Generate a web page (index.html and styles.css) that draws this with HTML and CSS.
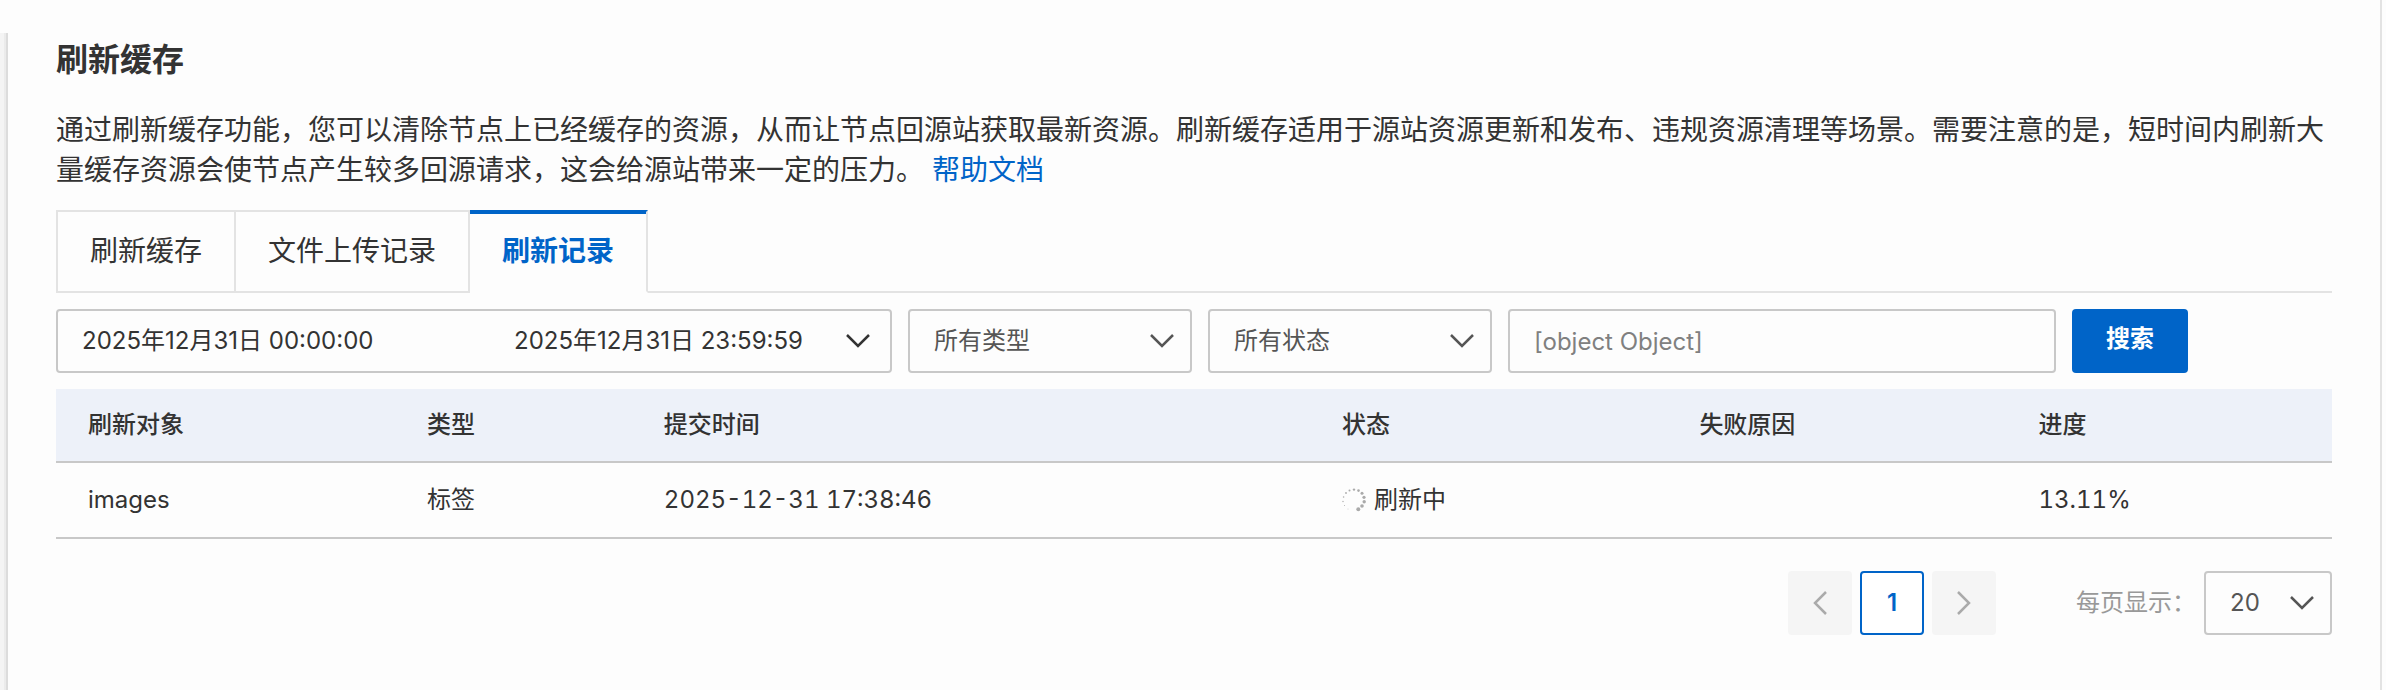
FILE: index.html
```html
<!DOCTYPE html>
<html lang="zh-CN">

<head>
	<meta charset="UTF-8">
	<meta name="viewport" content="width=device-width, initial-scale=1.0">
	<title>刷新缓存</title>
	<link rel="stylesheet" href="styles.css">
</head>

<body>
	<!-- 左侧边条 -->
	<div class="side"></div>
	<main class="page">
		<!-- 标题和说明 -->
		<h1 class="title">刷新缓存</h1>
		<p class="desc">通过刷新缓存功能，您可以清除节点上已经缓存的资源，从而让节点回源站获取最新资源。刷新缓存适用于源站资源更新和发布、违规资源清理等场景。需要注意的是，短时间内刷新大量缓存资源会使节点产生较多回源请求，这会给源站带来一定的压力。 <a href="#">帮助文档</a></p>

		<!-- 选项卡 -->
		<nav class="tabs">
			<a class="tab" href="#">刷新缓存</a>
			<a class="tab" href="#">文件上传记录</a>
			<a class="tab active" href="#">刷新记录</a>
			<span class="tabs-rest"></span>
		</nav>

		<!-- 筛选条件 -->
		<form class="filter">
			<div class="box date-range">
				<input type="text" value="2025年12月31日 00:00:00" aria-label="开始时间">
				<input type="text" value="2025年12月31日 23:59:59" aria-label="结束时间">
				<svg class="arrow" viewBox="0 0 24 14"><path d="M1 1l11 11L23 1" /></svg>
			</div>
			<div class="box select">
				<select aria-label="类型">
					<option>所有类型</option>
				</select>
				<svg class="arrow" viewBox="0 0 24 14"><path d="M1 1l11 11L23 1" /></svg>
			</div>
			<div class="box select">
				<select aria-label="状态">
					<option>所有状态</option>
				</select>
				<svg class="arrow" viewBox="0 0 24 14"><path d="M1 1l11 11L23 1" /></svg>
			</div>
			<input class="box keyword" type="text" placeholder="[object Object]" aria-label="关键字">
			<button class="search" type="button">搜索</button>
		</form>

		<!-- 刷新记录表格 -->
		<table class="record">
			<thead>
				<tr>
					<th class="col-target">刷新对象</th>
					<th class="col-type">类型</th>
					<th class="col-time">提交时间</th>
					<th class="col-status">状态</th>
					<th class="col-reason">失败原因</th>
					<th>进度</th>
				</tr>
			</thead>
			<tbody>
				<tr>
					<td>images</td>
					<td>标签</td>
					<td>2025-12-31 17:38:46</td>
					<td>
						<div class="status">
							<svg class="loading" viewBox="0 0 24 24">
								<circle cx="6" cy="21" r="0.4" />
								<circle cx="2.5" cy="17.5" r="0.5" />
								<circle cx="1" cy="13.5" r="0.7" />
								<circle cx="1.6" cy="9" r="0.8" />
								<circle cx="4" cy="5" r="0.9" />
								<circle cx="7.5" cy="2.5" r="1" />
								<circle cx="12" cy="1.6" r="1.2" />
								<circle cx="16.5" cy="2.6" r="1.3" />
								<circle cx="20" cy="5.3" r="1.5" />
								<circle cx="22" cy="9.3" r="1.6" />
								<circle cx="22.2" cy="13.8" r="1.7" />
								<circle cx="20" cy="18" r="1.8" />
								<circle cx="16.3" cy="21.3" r="2" />
							</svg>
							<span>刷新中</span>
						</div>
					</td>
					<td></td>
					<td>13.11%</td>
				</tr>
			</tbody>
		</table>

		<!-- 分页 -->
		<div class="pagination">
			<div class="pages">
				<button class="page-btn" type="button" disabled aria-label="上一页">
					<svg viewBox="0 0 14 24"><path d="M13 1L2 12l11 11" /></svg>
				</button>
				<button class="page-btn current" type="button">1</button>
				<button class="page-btn" type="button" disabled aria-label="下一页">
					<svg viewBox="0 0 14 24"><path d="M1 1l11 11L1 23" /></svg>
				</button>
			</div>
			<label class="size-label" for="page-size">每页显示：</label>
			<div class="box select page-size">
				<select id="page-size">
					<option>20</option>
				</select>
				<svg class="arrow" viewBox="0 0 24 14"><path d="M1 1l11 11L23 1" /></svg>
			</div>
		</div>
	</main>
</body>

</html>
```
FILE: styles.css
```css
/* 重置样式 */
* {
	margin: 0;
	padding: 0;
	box-sizing: border-box;
}

body {
	min-height: 100vh;
	padding-right: 4px;
	display: flex;
	background-color: #fdfdfd;
	color: #333;
	font-family: Inter, "Noto Sans CJK SC", sans-serif;
	font-size: 24px;
	line-height: 36px;
}

a {
	color: #0064c8;
	text-decoration: none;
}

input,
select,
button {
	border: none;
	outline: none;
	background: none;
	color: inherit;
	font: inherit;
}

svg {
	display: block;
	fill: none;
	stroke: currentColor;
	stroke-width: 2.5;
}

/* 左侧边条 */
.side {
	width: 8px;
	margin-top: 33px;
	border-right: 2px solid #dcdcdc;
	background-color: #f4f4f4;
	box-shadow: inset -2px 0 #ebebeb;
}

.page {
	flex: 1;
	padding: 36px 48px 0;
	border-right: 2px solid #e3e3e3;
}

/* 标题和说明 */
.title {
	margin-bottom: 26px;
	font-size: 32px;
	line-height: 48px;
}

.desc {
	margin-bottom: 20px;
	font-size: 28px;
	line-height: 40px;
}

/* 选项卡 */
.tabs {
	display: flex;
	font-size: 28px;
	line-height: 40px;
}

.tab {
	padding: 19px 32px 20px;
	border: 2px solid #e3e3e3;
	border-left: none;
	color: #333;
}

.tab:first-child {
	border-left: 2px solid #e3e3e3;
}

.tab.active {
	border-top-color: #0064c8;
	border-bottom-color: transparent;
	box-shadow: inset 0 2px #0064c8;
	color: #0064c8;
	font-weight: bold;
}

.tabs-rest {
	flex: 1;
	border-bottom: 2px solid #e3e3e3;
}

/* 筛选条件 */
.filter {
	display: flex;
	gap: 16px;
	margin: 16px 0;
}

.box {
	height: 64px;
	border: 2px solid #c8c8c8;
	border-radius: 4px;
}

.date-range {
	position: relative;
	width: 836px;
	padding-left: 24px;
	display: flex;
}

.date-range input {
	width: 432px;
}

.date-range input + input {
	width: 320px;
}

.select {
	position: relative;
	width: 284px;
	color: #555;
}

.select select {
	width: 100%;
	height: 100%;
	padding: 0 24px;
	appearance: none;
}

.arrow {
	position: absolute;
	top: 23px;
	right: 16px;
	width: 24px;
	height: 14px;
	pointer-events: none;
}

.date-range .arrow {
	right: 20px;
}

.keyword {
	width: 548px;
	padding: 0 24px;
	border: 2px solid #c8c8c8;
}

.keyword::placeholder {
	color: #808080;
}

.search {
	width: 116px;
	height: 64px;
	padding-bottom: 4px;
	border-radius: 4px;
	background-color: #0064c8;
	color: #fff;
	font-weight: bold;
}

/* 表格 */
.record {
	width: 100%;
	table-layout: fixed;
	border-spacing: 0;
	text-align: left;
	font-variant-numeric: tabular-nums;
}

.record th,
.record td {
	padding: 18px 32px;
	border-bottom: 2px solid #c8c8c8;
}

.record th {
	background-color: #edf1f9;
	font-weight: 500;
}

.record td {
	padding: 19px 32px;
}

.col-target {
	width: 14.9%;
}

.col-type {
	width: 10.4%;
}

.col-time {
	width: 29.8%;
}

.col-status {
	width: 15.7%;
}

.col-reason {
	width: 14.9%;
}

.status {
	display: flex;
	align-items: center;
	gap: 8px;
}

.loading {
	width: 24px;
	height: 24px;
	fill: #aaa;
	stroke: none;
}

/* 分页 */
.pagination {
	display: flex;
	justify-content: flex-end;
	align-items: center;
	margin-top: 32px;
}

.pages {
	display: flex;
	gap: 8px;
}

.page-btn {
	width: 64px;
	height: 64px;
	display: flex;
	justify-content: center;
	align-items: center;
	border-radius: 4px;
	background-color: #f5f5f5;
	color: #aaa;
}

.page-btn svg {
	width: 14px;
	height: 24px;
}

.page-btn.current {
	border: 2px solid #0064c8;
	background-color: #fff;
	color: #0064c8;
	font-weight: 600;
}

.size-label {
	margin: 0 8px 0 80px;
	color: #999;
}

.page-size {
	width: 128px;
}
```
